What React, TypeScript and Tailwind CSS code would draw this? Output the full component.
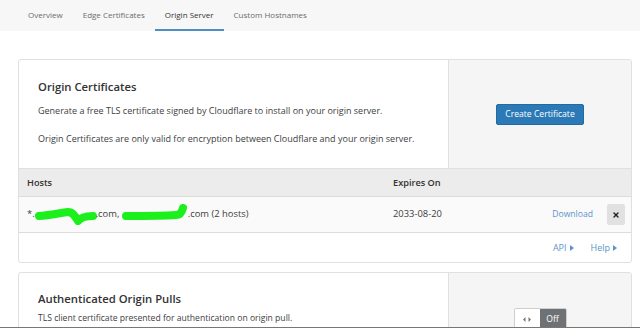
import { X } from "lucide-react";

const tabs = ["Overview", "Edge Certificates", "Origin Server", "Custom Hostnames"];

function Scribble({ w, d }: { w: number; d: string }) {
  return (
    <svg width={w} height="22" viewBox={`0 0 ${w} 22`} className="inline-block align-middle -my-2">
      <path d={d} fill="none" stroke="#1cf01c" strokeWidth="8" strokeLinecap="round" strokeLinejoin="round" />
    </svg>
  );
}

function Caret() {
  return (
    <svg width="4" height="6" viewBox="0 0 4 6" className="inline-block ml-[3px] align-middle">
      <path d="M0 0 L4 3 L0 6 Z" fill="currentColor" />
    </svg>
  );
}

export default function App() {
  return (
    <div
      className="h-[328px] overflow-hidden bg-white border-b border-[#777] text-[#404040]"
      style={{ fontFamily: '"Open Sans", "Noto Sans", sans-serif' }}
    >
      <div className="h-[31px] bg-[#f7f7f7] flex pl-[18px] text-[8px] text-[#6b6b6b]">
        {tabs.map((t) => (
          <div
            key={t}
            className={`px-[10px] flex items-center border-b-2 ${
              t === "Origin Server" ? "border-[#4d8fc4] text-[#333]" : "border-transparent"
            }`}
          >
            {t}
          </div>
        ))}
      </div>

      <div className="ml-[18px] mr-[8px] mt-[28px] border border-[#e0e0e0] rounded-[3px] overflow-hidden">
        <div className="flex h-[108px]">
          <div className="flex-1 pl-[19px] pt-[19px] whitespace-nowrap">
            <h2 className="text-[11.3px] font-semibold text-[#333]">Origin Certificates</h2>
            <p className="text-[9px] leading-[14px] mt-[8px]">
              Generate a free TLS certificate signed by Cloudflare to install on your origin server.
            </p>
            <p className="text-[9px] leading-[14px] mt-[14px]">
              Origin Certificates are only valid for encryption between Cloudflare and your origin server.
            </p>
          </div>
          <div className="w-[183px] bg-[#f5f5f5] border-l border-[#e0e0e0] flex items-center justify-center">
            <button className="h-[21px] px-[8px] rounded-[2px] bg-[#2b79b6] text-white text-[8.6px] border border-[#236a9f]">
              Create Certificate
            </button>
          </div>
        </div>

        <div className="h-[28px] bg-[#ececec] border-t border-[#e0e0e0] flex items-center text-[9.2px] font-semibold text-[#333]">
          <div className="w-[374px] pl-[8px]">Hosts</div>
          <div>Expires On</div>
        </div>

        <div className="h-[37px] bg-[#fafafa] border-y border-[#dcdcdc] flex items-center text-[9.4px]">
          <div className="w-[374px] pl-[8px] flex items-center whitespace-nowrap">
            <span>*.</span>
            <Scribble w={62} d="M4 13 C15 12 25 10 33 9 C38 9 40 13 43 18 C46 14 52 13 58 13" />
            <span className="-ml-[1px]">.com,&nbsp;</span>
            <Scribble w={66} d="M4 13 C20 13 40 13 54 12 C58 12 60 9 61 5" />
            <span>.com (2 hosts)</span>
          </div>
          <div className="flex-1">2033-08-20</div>
          <span className="text-[8.6px] text-[#5b95c9] mr-[14px]">Download</span>
          <div className="w-[18px] h-[21px] bg-[#e1e1e1] rounded-[2px] flex items-center justify-center mr-[6px]">
            <X className="w-[8px] h-[8px] text-[#222]" strokeWidth={4} />
          </div>
        </div>

        <div className="h-[29px] flex items-center justify-end text-[9px] text-[#5b95c9] pr-[14px] gap-[17px]">
          <span className="flex items-center">
            API
            <Caret />
          </span>
          <span className="flex items-center">
            Help
            <Caret />
          </span>
        </div>
      </div>

      <div className="ml-[18px] mr-[8px] mt-[9px] border border-[#e0e0e0] rounded-[3px] overflow-hidden flex h-[80px]">
        <div className="flex-1 pl-[19px] pt-[18px]">
          <h2 className="text-[11.3px] font-semibold text-[#333]">Authenticated Origin Pulls</h2>
          <p className="text-[8.6px] mt-[4px]">TLS client certificate presented for authentication on origin pull.</p>
        </div>
        <div className="w-[183px] bg-[#f5f5f5] border-l border-[#e0e0e0] flex justify-center pt-[35px]">
          <div className="flex h-[22px] rounded-[2px] overflow-hidden border border-[#cfcfcf]">
            <div className="w-[25px] bg-white flex items-center justify-center">
              <svg width="8" height="5" viewBox="0 0 8 5">
                <path d="M0 2.5 L2.5 0 L2.5 5 Z M8 2.5 L5.5 0 L5.5 5 Z" fill="#777" />
              </svg>
            </div>
            <div className="w-[26px] bg-[#6e7275] text-white text-[8.6px] flex items-center justify-center">Off</div>
          </div>
        </div>
      </div>
    </div>
  );
}
